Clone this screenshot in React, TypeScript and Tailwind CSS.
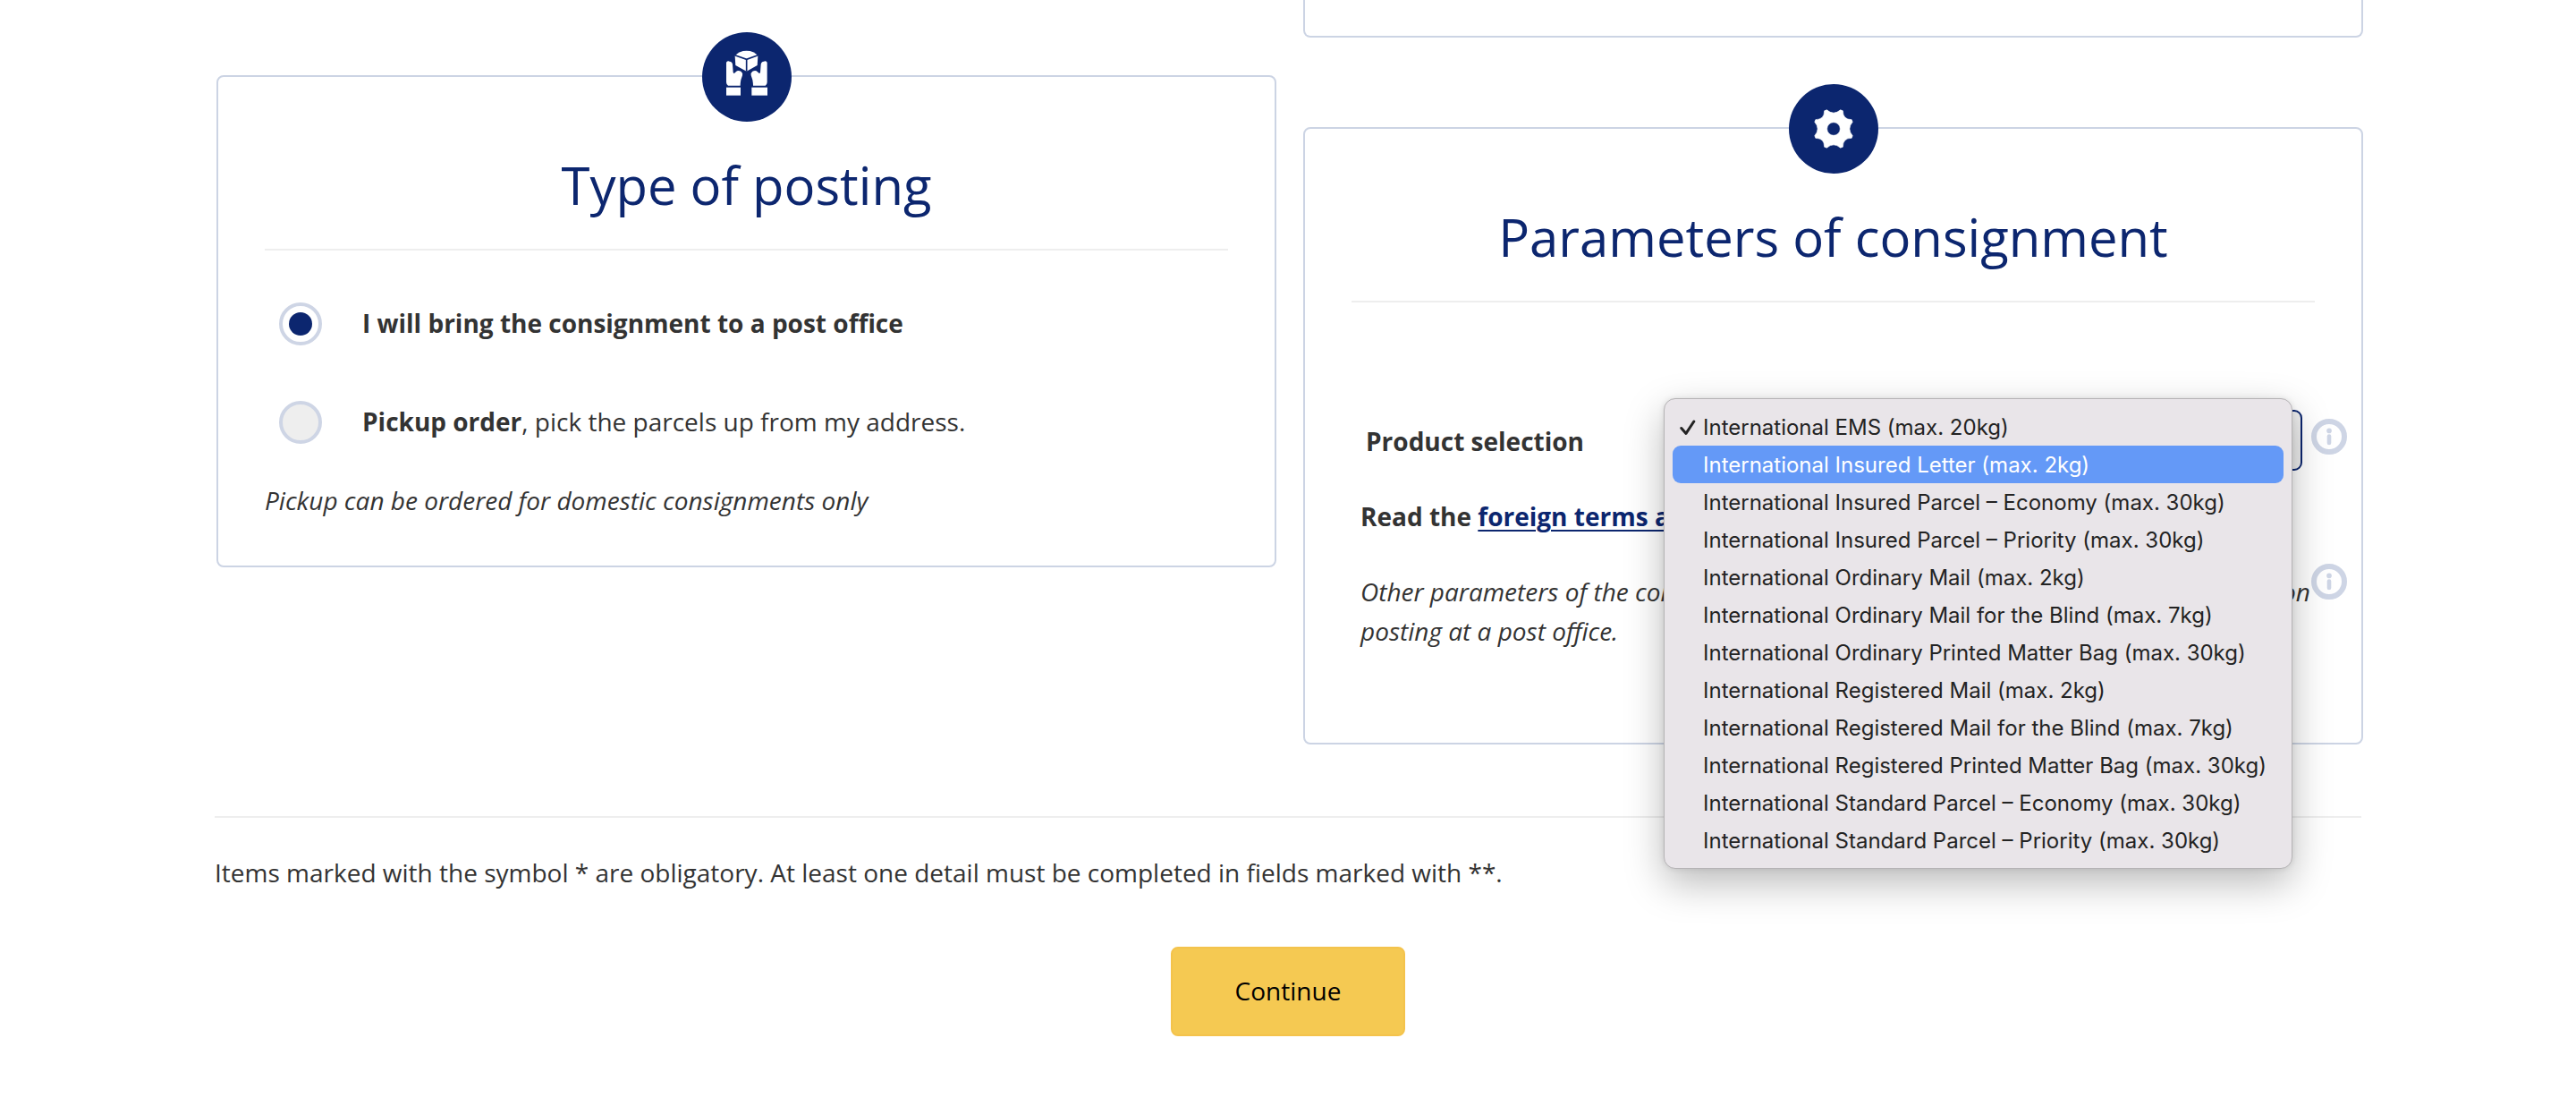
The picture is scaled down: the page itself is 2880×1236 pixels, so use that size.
import type { ReactNode } from "react";

const products = [
  "International EMS (max. 20kg)",
  "International Insured Letter (max. 2kg)",
  "International Insured Parcel – Economy (max. 30kg)",
  "International Insured Parcel – Priority (max. 30kg)",
  "International Ordinary Mail (max. 2kg)",
  "International Ordinary Mail for the Blind (max. 7kg)",
  "International Ordinary Printed Matter Bag (max. 30kg)",
  "International Registered Mail (max. 2kg)",
  "International Registered Mail for the Blind (max. 7kg)",
  "International Registered Printed Matter Bag (max. 30kg)",
  "International Standard Parcel – Economy (max. 30kg)",
  "International Standard Parcel – Priority (max. 30kg)",
];

function HandsIcon() {
  const hand =
    "M81 101 Q86 95 92 98 Q101 99 102 108 L104 134 Q106 141 110 136 L117 130 Q122 127 130 131 Q137 136 135 145 L130 160 Q128 172 128 179 L87 179 Q81 174 81 168 Z";

  return (
    <svg viewBox="0 0 300 300" className="size-full" fill="white">
      <path d="M110 79 Q124 62 149 62 Q174 62 187 79 L185 111 L149 131 L112 111 Z" />
      <path d="M110 77 L149 91 L187 77 M149 91 V131" fill="none" stroke="#0c266f" strokeWidth="5" />
      <path d={hand} />
      <path d={hand} transform="translate(299 0) scale(-1 1)" />
      <rect x="81" y="185" width="48" height="27" />
      <rect x="166" y="185" width="53" height="27" />
    </svg>
  );
}

function GearIcon() {
  return (
    <svg viewBox="-150 -150 300 300" className="size-full" fill="white">
      <path
        fillRule="evenodd"
        stroke="white"
        strokeWidth="2"
        strokeLinejoin="round"
        d="M-23 -63.5 Q0 -43.5 23 -63.5 L31 -60.5 Q30.8 -30.8 60.5 -31 L63.5 -23 Q43.5 0 63.5 23 L60.5 31 Q30.8 30.8 31 60.5 L23 63.5 Q0 43.5 -23 63.5 L-31 60.5 Q-30.8 30.8 -60.5 31 L-63.5 23 Q-43.5 0 -63.5 -23 L-60.5 -31 Q-30.8 -30.8 -31 -60.5 Z M-22 0 A22 22 0 1 0 22 0 A22 22 0 1 0 -22 0 Z"
      />
    </svg>
  );
}

function InfoIcon() {
  return (
    <svg viewBox="0 0 40 40" className="size-10 shrink-0">
      <circle cx="20" cy="20" r="17" fill="white" stroke="#ced5e5" strokeWidth="6" />
      <circle cx="20" cy="13.4" r="2.8" fill="#ced5e5" />
      <path d="M20 19.5 V27" stroke="#ced5e5" strokeWidth="4.6" strokeLinecap="round" />
    </svg>
  );
}

interface CardProps {
  title: string;
  icon: ReactNode;
  className: string;
  children: ReactNode;
}

function Card({ title, icon, className, children }: CardProps) {
  return (
    <section className={`relative rounded-lg border-2 border-[#ccd4e4] px-[52px] pt-[76px] ${className}`}>
      {/* Badge over the top border */}
      <div className="absolute -top-[50px] left-[541px] size-[100px] rounded-full bg-[#0c266f]">{icon}</div>
      <h2 className="border-b-2 border-[#eeeeee] pb-[26px] text-center text-[58px] leading-[90px] text-[#0c266f]">
        {title}
      </h2>
      {children}
    </section>
  );
}

function ProductMenu() {
  return (
    <ul className="absolute -left-[4px] -top-[15px] z-10 w-[703px] rounded-[13px] border border-[#b5b3b5] bg-[#e9e5e9] px-[9px] py-[10px] font-['Inter',sans-serif] text-[24px] text-[#232323] shadow-[0_16px_44px_rgba(0,0,0,0.27),0_0_6px_rgba(0,0,0,0.1)]">
      {products.map((product, index) => (
        <li
          key={product}
          className={
            index === 1
              ? "flex h-[42px] items-center whitespace-nowrap rounded-[9px] bg-[#6499f7] pt-[2px] text-white"
              : "flex h-[42px] items-center whitespace-nowrap pt-[2px]"
          }
        >
          <span className="flex w-[34px] shrink-0 pl-[8px]">
            {index === 0 && (
              <svg viewBox="0 0 18 18" className="size-[18px]" fill="none" stroke="#232323" strokeWidth="3">
                <path d="M1.8 9.5 L7 15.4 L15.8 2" strokeLinecap="round" strokeLinejoin="round" />
              </svg>
            )}
          </span>
          {product}
        </li>
      ))}
    </ul>
  );
}

function App() {
  return (
    <div className="h-[1236px] overflow-hidden bg-white font-['Open_Sans',sans-serif] text-[28px] leading-[44px] text-[#333333]">
      <main className="mx-auto w-[2400px]">
        <div className="ml-[2px] flex h-[912px] gap-[30px]">
          <div className="w-[1185px] shrink-0 pt-[84px]">
            <Card title="Type of posting" icon={<HandsIcon />} className="h-[550px]">
              <div className="mt-[58px] flex flex-col gap-[62px] pl-4">
                <label className="flex h-12 items-center gap-[45px]">
                  <span className="flex size-12 items-center justify-center rounded-full border-4 border-[#ced5e5] bg-white">
                    <span className="size-[26px] rounded-full bg-[#0c266f]" />
                  </span>
                  <strong className="pb-[2px]">I will bring the consignment to a post office</strong>
                </label>
                <label className="flex h-12 items-center gap-[45px]">
                  <span className="size-12 rounded-full border-4 border-[#ced5e5] bg-[#eeeeee]" />
                  <span className="pb-[2px]">
                    <strong>Pickup order</strong>, pick the parcels up from my address.
                  </span>
                </label>
              </div>
              <p className="mt-[41px] italic">Pickup can be ordered for domestic consignments only</p>
            </Card>
          </div>

          <div className="w-[1185px] shrink-0">
            <div className="h-[42px] rounded-b-lg border-2 border-t-0 border-[#ccd4e4]" />
            <Card title="Parameters of consignment" icon={<GearIcon />} className="mt-[100px] h-[690px]">
              <div className="-mr-9 mt-[120px] flex h-[68px] items-center pl-[16px]">
                <strong className="w-[335px] pt-[2px]">Product selection</strong>
                <div className="relative h-[68px] w-[712px] rounded-[9px] border-2 border-[#0c266f] bg-[#eeeeee]">
                  <ProductMenu />
                </div>
                <div className="flex h-full items-start pl-[10px] pt-[10px]">
                  <InfoIcon />
                </div>
              </div>
              <p className="mt-[29px] pl-[10px] font-bold">
                Read the{" "}
                <a href="#terms" className="text-[#0c266f] underline decoration-2 underline-offset-4">
                  foreign terms and conditions
                </a>
              </p>
              <div className="-mr-9 mt-[31px] flex items-start pl-[10px]">
                <div className="mt-[9px] w-[1062px] italic">
                  <p className="flex justify-between">
                    <span>Other parameters of the consignment will be determined</span>
                    <span>upon</span>
                  </p>
                  <p>posting at a post office.</p>
                </div>
                <div className="ml-px">
                  <InfoIcon />
                </div>
              </div>
            </Card>
          </div>
        </div>

        <footer className="border-t-2 border-[#eeeeee]">
          <p className="mt-[39px]">
            Items marked with the symbol * are obligatory. At least one detail must be completed in fields marked with **.
          </p>
          <button className="mx-auto mt-[61px] block h-[100px] w-[262px] rounded-lg border-2 border-[#f4c34c] bg-[#f5c952] pb-[2px] text-black">
            Continue
          </button>
        </footer>
      </main>
    </div>
  );
}

export default App;
